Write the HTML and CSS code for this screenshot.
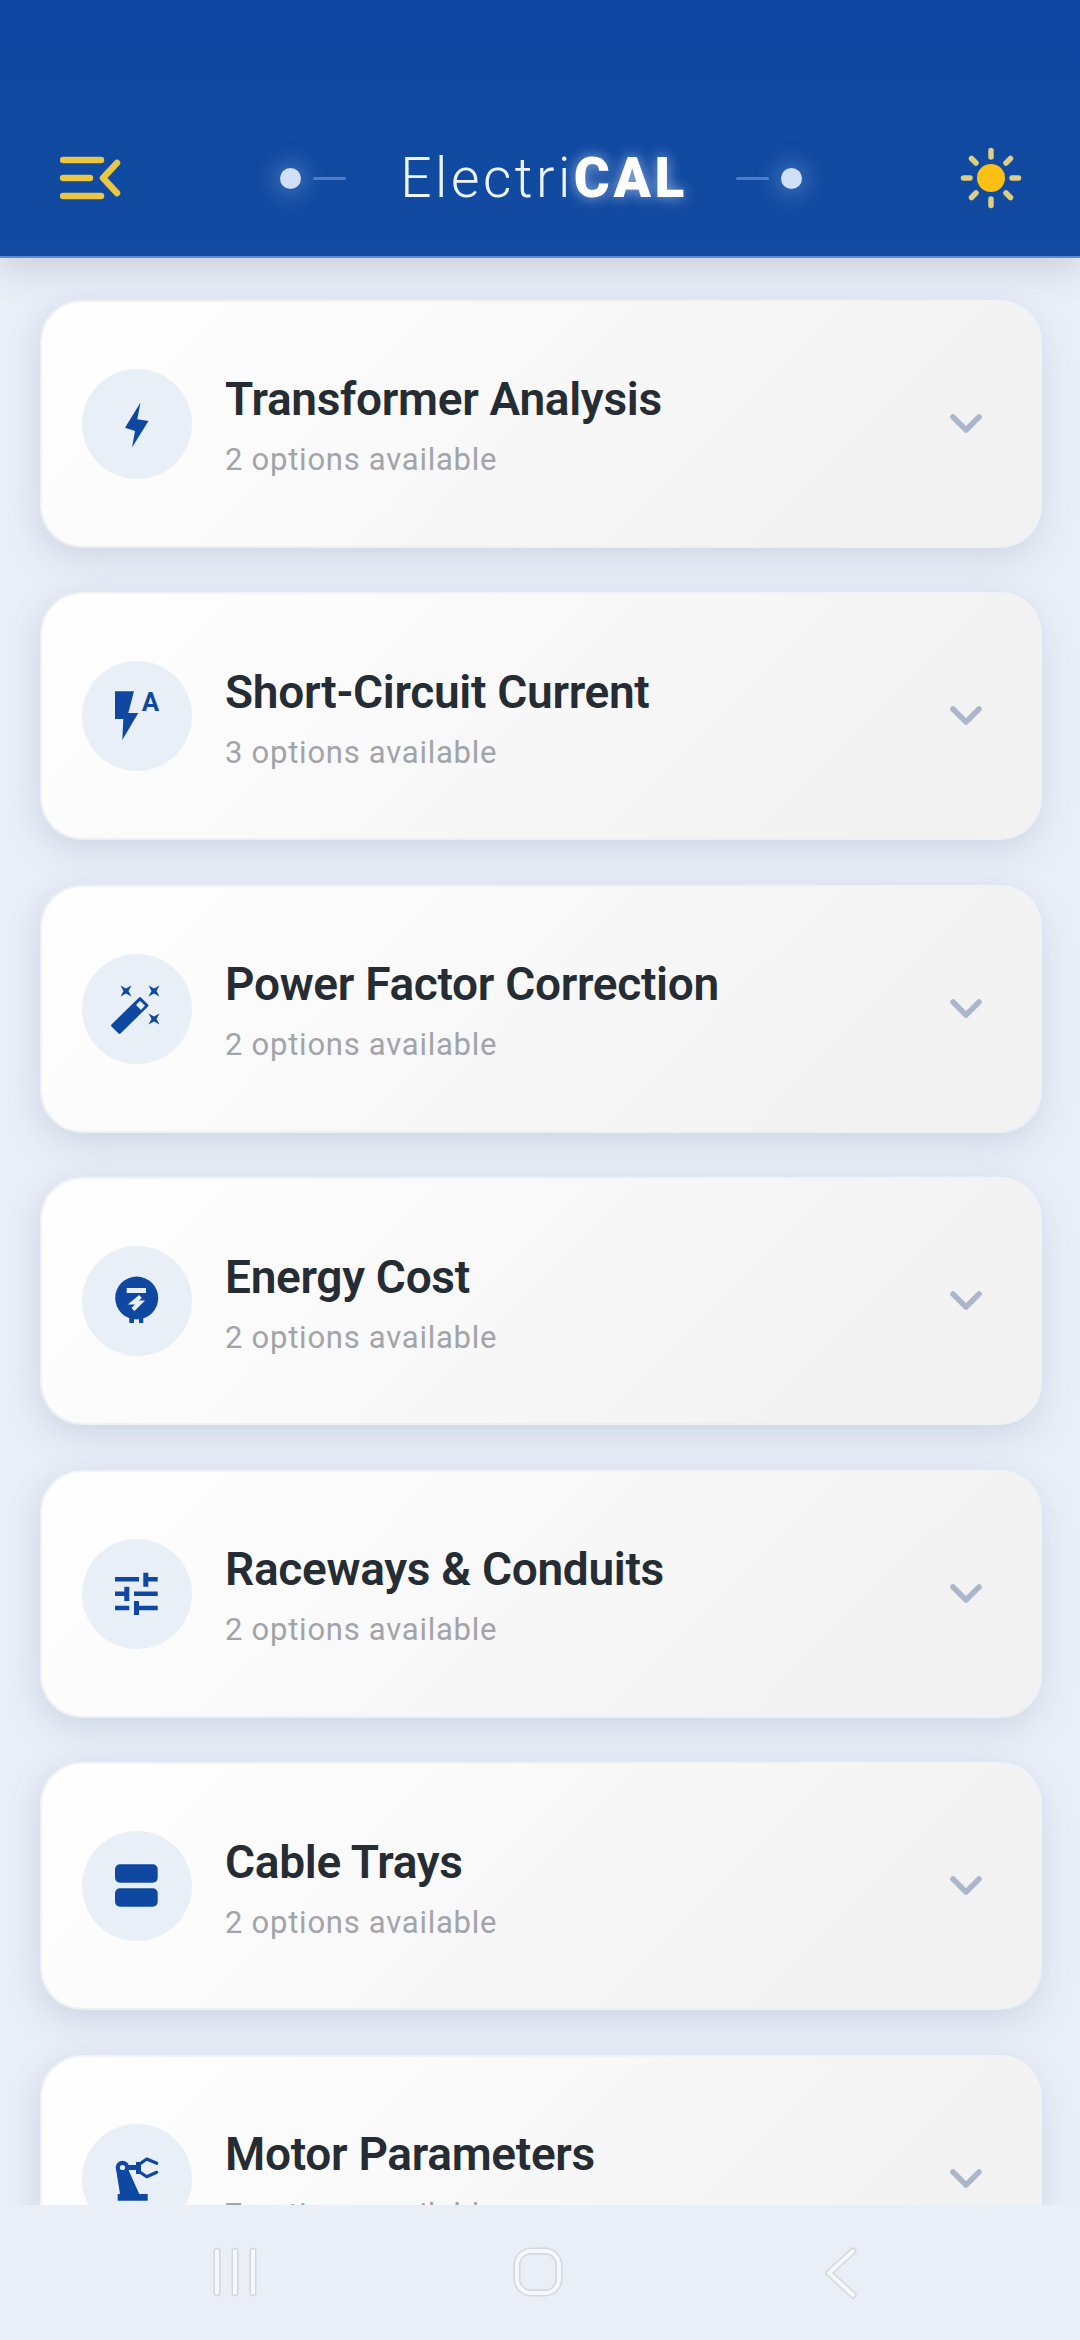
FILE: index.html
```html
<!DOCTYPE html>
<html lang="en">
<head>
<meta charset="utf-8">
<title>ElectriCAL</title>
<link rel="stylesheet" href="styles.css">
</head>
<body>
<div class="app">
  <header class="header">
    <svg class="menu-icon" width="62" height="46" viewBox="0 0 62 46" fill="none" stroke="#e9c744" stroke-linecap="round" stroke-linejoin="round" stroke-width="6.5">
      <path d="M3 5H41M3 23H30M3 41H41M57 8 43 23l14 15"/>
    </svg>
    <div class="brand">
      <span class="dot"></span><span class="dash"></span>
      <h1 class="brand-name">Electri<b>CAL</b></h1>
      <span class="dash"></span><span class="dot"></span>
    </div>
    <svg class="sun-icon" width="62" height="62" viewBox="0 0 62 62">
      <g fill="none" stroke="#ddcd85" stroke-width="5.5" stroke-linecap="round">
        <path d="M31 3.5V10M31 52V58.500M3.500 31H10M52 31H58.500M11.500 11.500 16 16M46 46 50.500 50.500M50.500 11.500 46 16M16 46 11.500 50.500"/>
      </g>
      <circle cx="31" cy="31" r="14" fill="#fbc013"/>
    </svg>
  </header>

  <main class="list">
    <article class="card">
      <div class="icon-disc">
        <svg width="110" height="110" viewBox="0 0 110 110"><path class="ink" d="M58.500 33.500 43 58.700 53 62 50 78.500 66.500 52 55.300 50.300Z"/></svg>
      </div>
      <div class="card-text"><h2 class="card-title">Transformer Analysis</h2><p class="card-sub">2 options available</p></div>
      <svg class="chev" width="34" height="22" viewBox="0 0 34 22"><path d="M4 4 17 17 30 4"/></svg>
    </article>
    <article class="card">
      <div class="icon-disc">
        <svg width="110" height="110" viewBox="0 0 110 110"><path class="ink" d="M33 30.300H52L46.300 52H56.300L40.300 79 41.300 58H33Z"/><text class="glyph-a" x="68.500" y="50" text-anchor="middle">A</text></svg>
      </div>
      <div class="card-text"><h2 class="card-title">Short-Circuit Current</h2><p class="card-sub">3 options available</p></div>
      <svg class="chev" width="34" height="22" viewBox="0 0 34 22"><path d="M4 4 17 17 30 4"/></svg>
    </article>
    <article class="card">
      <div class="icon-disc">
        <svg width="110" height="110" viewBox="0 0 110 110">
          <path class="ink" d="M57 43.500a1.500 1.500 0 0 1 2 0L66 50.500a1.500 1.500 0 0 1 0 2L38.500 79.500a1.500 1.500 0 0 1-2 0L29.500 72.500a1.500 1.500 0 0 1 0-2Z"/>
          <path class="hole" d="M54 51 58 47 63 51.500 59 56Z"/>
          <path class="ink" d="M38.500 31.500 44 34.500 49.500 31.500 46.500 37 49.500 42.500 44 39.500 38.500 42.500 41.500 37ZM66.500 31.500 72 34.500 77.500 31.500 74.500 37 77.500 42.500 72 39.500 66.500 42.500 69.500 37ZM66.500 59.500 72 62.500 77.500 59.500 74.500 65 77.500 70.500 72 67.500 66.500 70.500 69.500 65Z"/>
        </svg>
      </div>
      <div class="card-text"><h2 class="card-title">Power Factor Correction</h2><p class="card-sub">2 options available</p></div>
      <svg class="chev" width="34" height="22" viewBox="0 0 34 22"><path d="M4 4 17 17 30 4"/></svg>
    </article>
    <article class="card">
      <div class="icon-disc">
        <svg width="110" height="110" viewBox="0 0 110 110">
          <circle class="ink" cx="54.700" cy="52" r="21.500"/>
          <path class="ink" d="M47.300 68H52V77H47.300ZM57 68H61.300V77H57Z"/>
          <path class="hole" d="M44.700 42H64V47H44.700Z"/>
          <path class="hole-line" d="M58.500 50.500 51.500 56.500H58L51 63.500"/>
        </svg>
      </div>
      <div class="card-text"><h2 class="card-title">Energy Cost</h2><p class="card-sub">2 options available</p></div>
      <svg class="chev" width="34" height="22" viewBox="0 0 34 22"><path d="M4 4 17 17 30 4"/></svg>
    </article>
    <article class="card">
      <div class="icon-disc">
        <svg width="110" height="110" viewBox="0 0 110 110">
          <path class="ink" d="M33 38H57V42.500H33ZM61.300 33.700H66.300V38H75.700V42.500H66.300V47.700H61.300ZM33 52.500H42.300V47.700H47.300V62H42.300V57H33ZM52 52.500H75.700V57H52ZM33 66.800H47.300V71.300H33ZM52 62H57V66.800H75.700V71.300H57V76H52Z"/>
        </svg>
      </div>
      <div class="card-text"><h2 class="card-title">Raceways &amp; Conduits</h2><p class="card-sub">2 options available</p></div>
      <svg class="chev" width="34" height="22" viewBox="0 0 34 22"><path d="M4 4 17 17 30 4"/></svg>
    </article>
    <article class="card">
      <div class="icon-disc">
        <svg width="110" height="110" viewBox="0 0 110 110">
          <rect class="ink" x="33" y="33.300" width="42.700" height="18.400" rx="5"/>
          <rect class="ink" x="33" y="57.300" width="42.700" height="18.400" rx="5"/>
        </svg>
      </div>
      <div class="card-text"><h2 class="card-title">Cable Trays</h2><p class="card-sub">2 options available</p></div>
      <svg class="chev" width="34" height="22" viewBox="0 0 34 22"><path d="M4 4 17 17 30 4"/></svg>
    </article>
    <article class="card">
      <div class="icon-disc">
        <svg width="110" height="110" viewBox="0 0 110 110">
          <path class="ink" d="M35.700 70H65.700V76.700H35.700ZM34 45H46L57.300 70H38Z"/>
          <circle class="ink" cx="40.500" cy="43.500" r="6.800"/>
          <circle class="hole" cx="40.500" cy="43.500" r="2.600"/>
          <path class="ink" d="M44 41H54V38H59V50H54V46H44Z"/>
          <path class="claw" d="M56.300 41 64.700 35 74.700 39.300M56.300 47 64.700 52.700 74.700 48.300"/>
        </svg>
      </div>
      <div class="card-text"><h2 class="card-title">Motor Parameters</h2><p class="card-sub">7 options available</p></div>
      <svg class="chev" width="34" height="22" viewBox="0 0 34 22"><path d="M4 4 17 17 30 4"/></svg>
    </article>
  </main>

  <nav class="navbar">
    <svg class="nav-recents" width="46" height="50" viewBox="0 0 46 50">
      <path class="nav-edge" d="M5 4V46M23 4V46M41 4V46"/><path class="nav-fill" d="M5 4V46M23 4V46M41 4V46"/>
    </svg>
    <svg class="nav-home" width="50" height="50" viewBox="0 0 50 50">
      <rect class="nav-edge" x="4" y="4" width="42" height="42" rx="14"/><rect class="nav-fill" x="4" y="4" width="42" height="42" rx="14"/>
    </svg>
    <svg class="nav-back" width="33" height="52" viewBox="0 0 33 52">
      <path class="nav-edge" d="M28 4 4 26 28 48"/><path class="nav-fill" d="M28 4 4 26 28 48"/>
    </svg>
  </nav>
</div>
</body>
</html>
```

FILE: styles.css
```css
* { box-sizing: border-box; margin: 0; padding: 0; }

html, body { width: 1080px; height: 2340px; overflow: hidden; }

body { background: #e9eef7; font-family: Roboto, "Liberation Sans", sans-serif; }

.app { display: flex; flex-direction: column; height: 2340px; }

.header {
  flex: none;
  height: 258px;
  padding: 132px 58px 0 60px;
  display: flex;
  align-items: flex-start;
  justify-content: space-between;
  background: linear-gradient(180deg, #0d47a2 0%, #124ba0 100%);
  border-bottom: 2px solid #5f8bd0;
  box-shadow: 0 8px 34px rgba(60, 70, 100, .2);
  position: relative;
  z-index: 2;
}

.menu-icon { margin-top: 23px; }
.sun-icon { margin-top: 15px; }

.brand { display: flex; align-items: center; gap: 12px; height: 92px; }

.dot {
  width: 21px;
  height: 21px;
  border-radius: 50%;
  background: #d0def6;
  box-shadow: 0 0 22px 6px rgba(170, 200, 250, .3);
}

.dash { width: 33px; height: 3px; border-radius: 2px; background: #4f7cc6; }

.brand-name {
  margin: 0 36px 0 42px;
  font-size: 55px;
  font-weight: 300;
  letter-spacing: 3.5px;
  color: #eef4ff;
  white-space: nowrap;
}

.brand-name b {
  font-weight: 900;
  color: #fff;
  text-shadow: 0 0 14px rgba(210, 225, 255, .7);
}

.list {
  flex: 1;
  min-height: 0;
  overflow: hidden;
  padding: 43.5px 40px 0 42px;
  display: flex;
  flex-direction: column;
  gap: 48.5px;
}

.card {
  flex: none;
  height: 244px;
  padding: 0 57px 0 40px;
  display: flex;
  align-items: center;
  border-radius: 40px;
  background: linear-gradient(135deg, #ffffff 0%, #f9f9fa 40%, #f2f2f2 85%);
  box-shadow:
    0 0 0 2px rgba(247, 249, 251, .7),
    0 14px 34px rgba(150, 165, 190, .26),
    -8px 0 24px rgba(170, 185, 210, .12);
}

.icon-disc {
  flex: none;
  width: 110px;
  height: 110px;
  border-radius: 50%;
  background: #e9eff7;
}

.icon-disc svg { display: block; }

.ink { fill: #0f48a0; }
.hole { fill: #e9eff7; }
.hole-line { fill: none; stroke: #e9eff7; stroke-width: 4.200; }
.claw { fill: none; stroke: #0f48a0; stroke-width: 3.200; stroke-linejoin: round; stroke-linecap: round; }
.glyph-a { font: 700 26px Roboto, sans-serif; fill: #0f48a0; }

.card-text { flex: 1; min-width: 0; margin-left: 33px; padding-top: 3px; }

.card-title {
  font-size: 46px;
  line-height: 54px;
  font-weight: 600;
  letter-spacing: -0.3px;
  color: #252c33;
  white-space: nowrap;
}

.card-sub {
  margin-top: 16px;
  font-size: 31px;
  line-height: 36px;
  font-weight: 400;
  letter-spacing: 0.75px;
  color: #a1a4a8;
}

.chev { flex: none; fill: none; stroke: #a9b6cc; stroke-width: 5.500; stroke-linecap: round; stroke-linejoin: round; }

.navbar {
  flex: none;
  height: 135px;
  padding: 42px 0 0 212px;
  display: flex;
  align-items: flex-start;
  background: #e9eef7;
  position: relative;
  z-index: 2;
}

.nav-home { margin-left: 255px; }
.nav-back { margin-left: 262px; }

.nav-edge { fill: none; stroke: #d3d7de; stroke-width: 7; stroke-linecap: round; stroke-linejoin: round; }
.nav-fill { fill: none; stroke: #f6f8fb; stroke-width: 4; stroke-linecap: round; stroke-linejoin: round; }
```
